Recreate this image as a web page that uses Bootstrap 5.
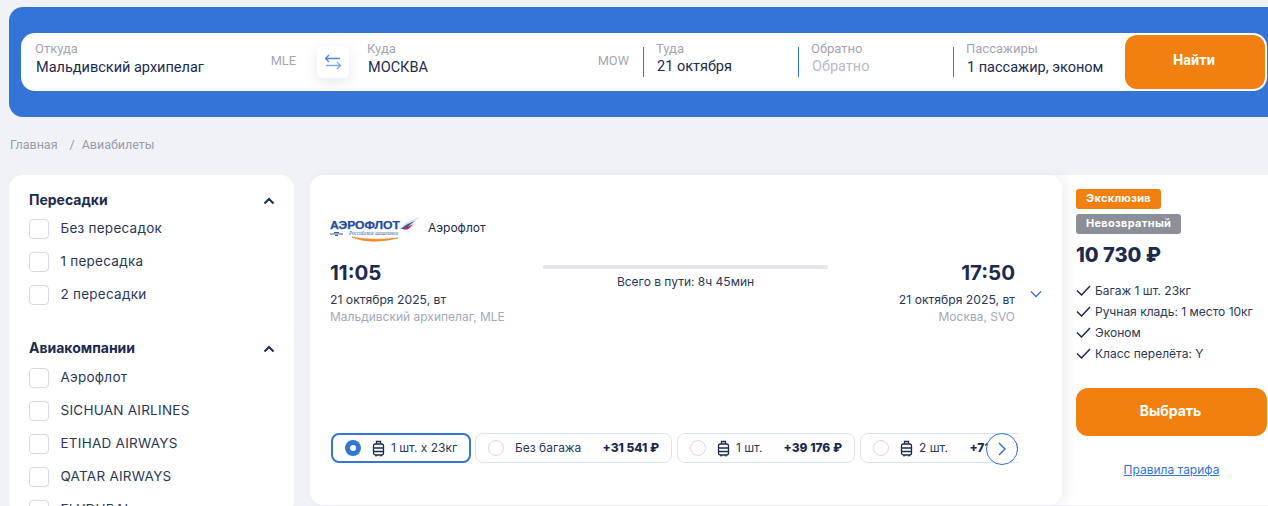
<!doctype html>
<html lang="ru">

<head>
  <meta charset="utf-8" />
  <meta name="viewport" content="width=device-width, initial-scale=1" />
  <title>Авиабилеты</title>
  <link href="https://cdn.jsdelivr.net/npm/bootstrap@5.3.5/dist/css/bootstrap.min.css" rel="stylesheet" />
  <style>
    html, body {
      overflow-x: hidden;
    }

    body {
      background-color: #f0f2f6;
      font-family: Inter, "Liberation Sans", sans-serif;
      color: #1b2a4e;
    }

    .search-panel {
      margin: 7px -20px 0 9px;
      height: 110px;
      padding: 26px 0 0 12px;
      background-color: #3374d6;
      border-radius: 14px;
    }

    .search-bar {
      width: 1246px;
      height: 58px;
      background-color: #fff;
      border-radius: 14px;
      font-family: Roboto, "Liberation Sans", sans-serif;
    }

    .search-field {
      height: 100%;
      padding-top: 8px;
      flex: none;
    }

    .field-from { width: 296px; padding-left: 14px; padding-right: 21px; }
    .field-to { width: 294px; padding-left: 18px; padding-right: 14px; }
    .field-date { width: 155px; padding-left: 13px; }
    .field-pax { width: 172px; padding-left: 13px; }

    .field-split {
      position: relative;
    }

    .field-split::before {
      content: "";
      position: absolute;
      left: 0;
      top: 14px;
      height: 30px;
      border-left: 1px solid #3374d6;
    }

    .field-label {
      font-size: 13px;
      line-height: 16px;
      color: #a3a5b3;
    }

    .field-value {
      font-size: 14.5px;
      line-height: 18px;
      margin-top: 1px;
      padding-left: 1px;
      color: #1b2a4e;
      white-space: nowrap;
    }

    .field-from .field-value,
    .field-to .field-value,
    .field-pax .field-value {
      margin-top: 2px;
    }

    .field-value.is-empty {
      color: #b8bac6;
    }

    .field-code {
      font-size: 12.8px;
      color: #a3a5b3;
      line-height: 16px;
      margin-top: 12px;
    }

    .swap-btn {
      width: 32px;
      height: 32px;
      margin-top: 13px;
      flex: none;
      background-color: #fff;
      border: 0;
      border-radius: 5px;
      padding: 0;
      box-shadow: 0 4px 14px rgba(40, 70, 130, .12);
    }

    .find-btn {
      width: 140px;
      height: 54px;
      margin: 2px 0 0 0;
      flex: none;
      background-color: #f28010;
      color: #fff;
      border: 0;
      border-radius: 12px;
      font-size: 14.5px;
      font-weight: 700;
      padding: 0 2px 3px 0;
    }

    .crumbs {
      padding: 20px 0 0 10px;
      height: 58px;
      font-family: Roboto, "Liberation Sans", sans-serif;
      font-size: 12.5px;
      line-height: 15px;
      color: #9a9cab;
    }

    .crumb-sep {
      margin: 0 7px 0 12px;
    }

    .page-cols {
      padding-left: 9px;
      gap: 16px;
    }

    .filters {
      width: 285px;
      flex: none;
      background-color: #fff;
      border-radius: 14px;
      padding: 16px 19px 0 20px;
      height: 340px;
      overflow: hidden;
    }

    .filter-title {
      font-size: 14px;
      line-height: 17px;
      font-weight: 700;
      margin-bottom: 4px;
    }

    .filter-title svg {
      margin-top: 2px;
    }

    .filter-title.next-group {
      margin-top: 28px;
      margin-bottom: 5px;
    }

    .filter-row {
      height: 33px;
      font-size: 13.5px;
      letter-spacing: .25px;
      color: #2a3757;
    }

    .filter-box {
      width: 20px;
      height: 20px;
      flex: none;
      border: 1px solid #d5d9e3;
      border-radius: 4px;
      margin-right: 11.5px;
    }

    .ticket {
      width: 958px;
      height: 330px;
      flex: none;
      display: flex;
      background-color: #fff;
      border-radius: 14px 0 0 14px;
    }

    .ticket-main {
      width: 752px;
      flex: none;
      height: 100%;
      padding: 38px 20px 0;
      border-radius: 14px;
      background-color: #fff;
      box-shadow: 5px 0 12px rgba(60, 60, 130, .07);
      position: relative;
      z-index: 1;
    }

    .carrier {
      height: 32px;
      font-size: 12px;
      gap: 6px;
    }

    .carrier span {
      margin-bottom: 2px;
    }

    .flight-row {
      margin-top: 16px;
      width: 685px;
    }

    .flight-from {
      width: 213px;
      flex: none;
    }

    .flight-to {
      width: 187px;
      flex: none;
    }

    .flight-time {
      font-size: 20.5px;
      line-height: 24px;
      font-weight: 700;
    }

    .flight-date {
      font-size: 12.2px;
      line-height: 16px;
      margin-top: 7px;
      color: #2a3757;
    }

    .flight-place {
      font-size: 12px;
      line-height: 17px;
      color: #a3a8ba;
    }

    .flight-mid {
      width: 285px;
      flex: none;
      font-size: 12px;
      padding-top: 4px;
      text-align: center;
      color: #2a3757;
    }

    .flight-bar {
      height: 4px;
      background-color: #e1e4ec;
      border-radius: 2px;
      margin-bottom: 4px;
    }

    .more-chevron {
      position: absolute;
      left: 720px;
      top: 115px;
    }

    .fare-strip {
      position: absolute;
      left: 21px;
      top: 258px;
      width: 687px;
      height: 32px;
      display: flex;
      gap: 5px;
      overflow: hidden;
    }

    .fare-tab {
      height: 30px;
      flex: none;
      display: flex;
      align-items: center;
      border: 1px solid #dbe2f0;
      border-radius: 8px;
      padding-left: 12px;
      font-size: 12px;
      color: #2a3757;
      white-space: nowrap;
      background-color: #fff;
    }

    .fare-tab.is-active {
      border: 2px solid #3374d6;
    }

    .tab-active-w { width: 140px; margin-right: -1px; }
    .tab-none-w { width: 197px; }
    .tab-bag-w { width: 178px; }

    .fare-radio {
      width: 16px;
      height: 16px;
      flex: none;
      border-radius: 50%;
      border: 1px solid #d5d9e3;
      margin-right: 11px;
    }

    .fare-tab.is-active .fare-radio {
      border: 5px solid #3374d6;
    }

    .fare-price {
      font-weight: 800;
      color: #1b2a4e;
      margin-left: auto;
      padding-right: 12px;
    }

    .fare-bag {
      margin-right: 6px;
      flex: none;
    }

    .next-btn {
      position: absolute;
      left: 676px;
      top: 258px;
      width: 32px;
      height: 32px;
      padding: 0;
      border: 1px solid #3374d6;
      border-radius: 50%;
      background-color: #fff;
    }

    .fare-side {
      padding: 14px 0 0 14px;
      flex: 1;
    }

    .tag-label {
      display: block;
      width: fit-content;
      height: 20px;
      line-height: 19px;
      padding: 0 10px;
      color: #fff;
      font-size: 11px;
      font-weight: 700;
      border-radius: 3px;
      margin-bottom: 5px;
      letter-spacing: .3px;
    }

    .tag-orange { background-color: #f28010; }
    .tag-grey { background-color: #8c8f97; }

    .fare-total {
      font-size: 20px;
      line-height: 24px;
      font-weight: 800;
      margin-top: 9px;
      margin-bottom: 13px;
    }

    .perk {
      height: 21px;
      font-size: 12px;
      gap: 4px;
      color: #2a3757;
    }

    .pick-btn {
      display: block;
      width: 191px;
      height: 48px;
      margin-top: 24px;
      border: 0;
      border-radius: 12px;
      background-color: #f28010;
      color: #fff;
      font-size: 14px;
      font-weight: 700;
      padding: 0 2px 4px 0;
    }

    .rules-link {
      display: block;
      width: 191px;
      text-align: center;
      margin-top: 25px;
      font-size: 12px;
      color: #3374d6;
    }

    .brand-word {
      font-family: "Liberation Sans", sans-serif;
      font-weight: 700;
      font-size: 10.5px;
      fill: #1f4d9c;
      stroke: #1f4d9c;
      stroke-width: .25px;
    }

    .brand-sub {
      font-family: "Liberation Serif", serif;
      font-style: italic;
      font-size: 5.5px;
      fill: #2a5aa8;
    }
  </style>
</head>

<body>
  <div class="search-panel">
    <div class="search-bar d-flex">
      <div class="search-field field-from d-flex justify-content-between">
        <div>
          <div class="field-label">Откуда</div>
          <div class="field-value">Мальдивский архипелаг</div>
        </div>
        <div class="field-code">MLE</div>
      </div>
      <button class="swap-btn d-flex align-items-center justify-content-center" type="button" aria-label="Поменять">
        <svg width="18" height="16" viewBox="0 0 18 16" fill="none" stroke="#4a86e0" stroke-width="1.3">
          <path d="M5 1 1.500 4.500 5 8M1.500 4.500H16" />
          <path d="M13 8l3.500 3.500L13 15M16.500 11.500H2" stroke="#7fa9ea" />
        </svg>
      </button>
      <div class="search-field field-to d-flex justify-content-between">
        <div>
          <div class="field-label">Куда</div>
          <div class="field-value">МОСКВА</div>
        </div>
        <div class="field-code">MOW</div>
      </div>
      <div class="search-field field-date field-split">
        <div class="field-label">Туда</div>
        <div class="field-value">21 октября</div>
      </div>
      <div class="search-field field-date field-split">
        <div class="field-label">Обратно</div>
        <div class="field-value is-empty">Обратно</div>
      </div>
      <div class="search-field field-pax field-split">
        <div class="field-label">Пассажиры</div>
        <div class="field-value">1 пассажир, эконом</div>
      </div>
      <button class="find-btn" type="button">Найти</button>
    </div>
  </div>

  <div class="crumbs">Главная<span class="crumb-sep">/</span>Авиабилеты</div>

  <div class="page-cols d-flex">
    <aside class="filters">
      <div class="filter-title d-flex justify-content-between align-items-center">
        Пересадки
        <svg width="12" height="8" viewBox="0 0 12 8" fill="none" stroke="#1b2a4e" stroke-width="2">
          <path d="M1.500 6.500 6 2l4.500 4.500" />
        </svg>
      </div>
      <div class="filter-row d-flex align-items-center"><span class="filter-box"></span>Без пересадок</div>
      <div class="filter-row d-flex align-items-center"><span class="filter-box"></span>1 пересадка</div>
      <div class="filter-row d-flex align-items-center"><span class="filter-box"></span>2 пересадки</div>
      <div class="filter-title next-group d-flex justify-content-between align-items-center">
        Авиакомпании
        <svg width="12" height="8" viewBox="0 0 12 8" fill="none" stroke="#1b2a4e" stroke-width="2">
          <path d="M1.500 6.500 6 2l4.500 4.500" />
        </svg>
      </div>
      <div class="filter-row d-flex align-items-center"><span class="filter-box"></span>Аэрофлот</div>
      <div class="filter-row d-flex align-items-center"><span class="filter-box"></span>SICHUAN AIRLINES</div>
      <div class="filter-row d-flex align-items-center"><span class="filter-box"></span>ETIHAD AIRWAYS</div>
      <div class="filter-row d-flex align-items-center"><span class="filter-box"></span>QATAR AIRWAYS</div>
      <div class="filter-row d-flex align-items-center"><span class="filter-box"></span>FLYDUBAI</div>
    </aside>

    <section class="ticket">
      <div class="ticket-main">
        <div class="carrier d-flex align-items-center">
          <svg width="92" height="30" viewBox="0 0 92 30">
            <text class="brand-word" x="0" y="15" textLength="70" lengthAdjust="spacingAndGlyphs">АЭРОФЛОТ</text>
            <path d="M69 15 Q75 7 91 3 Q82 8 77 15Z" fill="#d9dde8" />
            <path d="M71 15 Q76 10 85 7 Q79 11 76 15Z" fill="#2a5aa8" />
            <path d="M73 15.500 Q78 12 84 10 Q80 13 78 15.500Z" fill="#d8262c" />
            <path d="M0 20h13M4 18.500h5M5 21.500h3" stroke="#1f4d9c" stroke-width=".9" fill="none" />
            <text class="brand-sub" x="19" y="21" textLength="49" lengthAdjust="spacingAndGlyphs">Российские авиалинии</text>
            <path d="M22 23 Q40 31 68 24 Q42 27 22 23Z" fill="#ee8a2d" stroke="#ee8a2d" stroke-width=".7" />
          </svg>
          <span>Аэрофлот</span>
        </div>

        <div class="flight-row d-flex">
          <div class="flight-from">
            <div class="flight-time">11:05</div>
            <div class="flight-date">21 октября 2025, вт</div>
            <div class="flight-place">Мальдивский архипелаг, MLE</div>
          </div>
          <div class="flight-mid">
            <div class="flight-bar"></div>
            Всего в пути: 8ч 45мин
          </div>
          <div class="flight-to text-end">
            <div class="flight-time">17:50</div>
            <div class="flight-date">21 октября 2025, вт</div>
            <div class="flight-place">Москва, SVO</div>
          </div>
        </div>

        <svg class="more-chevron" width="12" height="8" viewBox="0 0 12 8" fill="none" stroke="#3374d6" stroke-width="1.300">
          <path d="M1 1.500 6 6.500l5-5" />
        </svg>

        <div class="fare-strip">
          <div class="fare-tab is-active tab-active-w">
            <span class="fare-radio"></span>
            <svg class="fare-bag" width="13" height="17" viewBox="0 0 13 17" fill="none" stroke="#1b2a4e" stroke-width="1.300">
              <rect x="1.500" y="4" width="10" height="11" rx="2" />
              <path d="M4.500 4V1.500h4V4M1.500 8h10M1.500 11.500h10M4 15v1.500M9 15v1.500" />
            </svg>
            1 шт. х 23кг
          </div>
          <div class="fare-tab tab-none-w">
            <span class="fare-radio"></span>
            Без багажа
            <span class="fare-price">+31 541 ₽</span>
          </div>
          <div class="fare-tab tab-bag-w">
            <span class="fare-radio"></span>
            <svg class="fare-bag" width="13" height="17" viewBox="0 0 13 17" fill="none" stroke="#1b2a4e" stroke-width="1.300">
              <rect x="1.500" y="4" width="10" height="11" rx="2" />
              <path d="M4.500 4V1.500h4V4M1.500 8h10M1.500 11.500h10M4 15v1.500M9 15v1.500" />
            </svg>
            1 шт.
            <span class="fare-price">+39 176 ₽</span>
          </div>
          <div class="fare-tab tab-bag-w">
            <span class="fare-radio"></span>
            <svg class="fare-bag" width="13" height="17" viewBox="0 0 13 17" fill="none" stroke="#1b2a4e" stroke-width="1.300">
              <rect x="1.500" y="4" width="10" height="11" rx="2" />
              <path d="M4.500 4V1.500h4V4M1.500 8h10M1.500 11.500h10M4 15v1.500M9 15v1.500" />
            </svg>
            2 шт.
            <span class="fare-price">+71 812 ₽</span>
          </div>
        </div>
        <button class="next-btn d-flex align-items-center justify-content-center" type="button" aria-label="Дальше">
          <svg width="8" height="14" viewBox="0 0 8 14" fill="none" stroke="#3374d6" stroke-width="1.500">
            <path d="M1 1l6 6-6 6" />
          </svg>
        </button>
      </div>

      <div class="fare-side">
        <span class="tag-label tag-orange">Эксклюзив</span>
        <span class="tag-label tag-grey">Невозвратный</span>
        <div class="fare-total">10 730 ₽</div>
        <div class="perk d-flex align-items-center">
          <svg width="15" height="11" viewBox="0 0 15 11" fill="none" stroke="#1b2a4e" stroke-width="1.500"><path d="M1 5.500l4.500 4.500L14 1" /></svg>
          Багаж 1 шт. 23кг
        </div>
        <div class="perk d-flex align-items-center">
          <svg width="15" height="11" viewBox="0 0 15 11" fill="none" stroke="#1b2a4e" stroke-width="1.500"><path d="M1 5.500l4.500 4.500L14 1" /></svg>
          Ручная кладь: 1 место 10кг
        </div>
        <div class="perk d-flex align-items-center">
          <svg width="15" height="11" viewBox="0 0 15 11" fill="none" stroke="#1b2a4e" stroke-width="1.500"><path d="M1 5.500l4.500 4.500L14 1" /></svg>
          Эконом
        </div>
        <div class="perk d-flex align-items-center">
          <svg width="15" height="11" viewBox="0 0 15 11" fill="none" stroke="#1b2a4e" stroke-width="1.500"><path d="M1 5.500l4.500 4.500L14 1" /></svg>
          Класс перелёта: Y
        </div>
        <button class="pick-btn" type="button">Выбрать</button>
        <a class="rules-link" href="#">Правила тарифа</a>
      </div>
    </section>
  </div>

  <script src="https://cdn.jsdelivr.net/npm/bootstrap@5.3.5/dist/js/bootstrap.bundle.min.js"></script>
</body>

</html>
